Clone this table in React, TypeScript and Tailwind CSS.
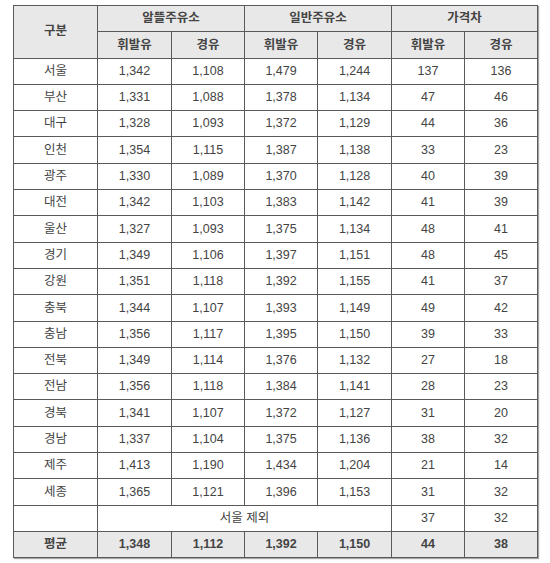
import React from "react";

const rows: string[][] = [
  ["서울", "1,342", "1,108", "1,479", "1,244", "137", "136"],
  ["부산", "1,331", "1,088", "1,378", "1,134", "47", "46"],
  ["대구", "1,328", "1,093", "1,372", "1,129", "44", "36"],
  ["인천", "1,354", "1,115", "1,387", "1,138", "33", "23"],
  ["광주", "1,330", "1,089", "1,370", "1,128", "40", "39"],
  ["대전", "1,342", "1,103", "1,383", "1,142", "41", "39"],
  ["울산", "1,327", "1,093", "1,375", "1,134", "48", "41"],
  ["경기", "1,349", "1,106", "1,397", "1,151", "48", "45"],
  ["강원", "1,351", "1,118", "1,392", "1,155", "41", "37"],
  ["충북", "1,344", "1,107", "1,393", "1,149", "49", "42"],
  ["충남", "1,356", "1,117", "1,395", "1,150", "39", "33"],
  ["전북", "1,349", "1,114", "1,376", "1,132", "27", "18"],
  ["전남", "1,356", "1,118", "1,384", "1,141", "28", "23"],
  ["경북", "1,341", "1,107", "1,372", "1,127", "31", "20"],
  ["경남", "1,337", "1,104", "1,375", "1,136", "38", "32"],
  ["제주", "1,413", "1,190", "1,434", "1,204", "21", "14"],
  ["세종", "1,365", "1,121", "1,396", "1,153", "31", "32"],
];

const cell = "border border-[#5a5a5a] text-center align-middle p-0";
const font = { fontFamily: '"Liberation Sans", "Noto Sans CJK KR", sans-serif' };

export default function App() {
  return (
    <div className="w-[550px] h-[563px] bg-white pt-[5px] pl-[13px]" style={font}>
      <table
        className="border-collapse table-fixed text-[12.5px] text-[#444] border-[1.5px] border-[#4a4a4a] shadow-[1px_1px_1px_rgba(0,0,0,0.35)]"
        style={{ width: 524 }}
      >
        <colgroup>
          <col style={{ width: 84 }} />
          <col style={{ width: 74 }} />
          <col style={{ width: 73 }} />
          <col style={{ width: 73 }} />
          <col style={{ width: 74 }} />
          <col style={{ width: 73 }} />
          <col style={{ width: 73 }} />
        </colgroup>
        <tbody>
          <tr className="h-[26.3px] bg-[#e8e8e8] font-bold">
            <td className={cell} rowSpan={2}>구분</td>
            <td className={cell} colSpan={2}>알뜰주유소</td>
            <td className={cell} colSpan={2}>일반주유소</td>
            <td className={cell} colSpan={2}>가격차</td>
          </tr>
          <tr className="h-[26.3px] bg-[#e8e8e8] font-bold">
            <td className={cell}>휘발유</td>
            <td className={cell}>경유</td>
            <td className={cell}>휘발유</td>
            <td className={cell}>경유</td>
            <td className={cell}>휘발유</td>
            <td className={cell}>경유</td>
          </tr>
          {rows.map((r) => (
            <tr key={r[0]} className="h-[26.3px]">
              {r.map((v, i) => (
                <td key={i} className={cell}>{v}</td>
              ))}
            </tr>
          ))}
          <tr className="h-[26.3px]">
            <td className={cell}></td>
            <td className={cell} colSpan={4}>서울 제외</td>
            <td className={cell}>37</td>
            <td className={cell}>32</td>
          </tr>
          <tr className="h-[26.3px] bg-[#e8e8e8] font-bold">
            {["평균", "1,348", "1,112", "1,392", "1,150", "44", "38"].map((v, i) => (
              <td key={i} className={cell}>{v}</td>
            ))}
          </tr>
        </tbody>
      </table>
    </div>
  );
}
